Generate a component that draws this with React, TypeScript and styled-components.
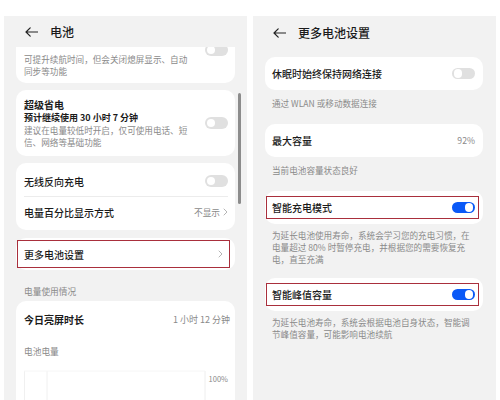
import React from "react";
import styled, { createGlobalStyle, css } from "styled-components";

const Global = createGlobalStyle`
  html, body { margin: 0; padding: 0; background: #ffffff; }
  body { font-family: "Noto Sans CJK SC", "Noto Sans", sans-serif; color: #1b1b1b; }
  * { box-sizing: border-box; }
`;

const Screen = styled.div`
  width: 500px;
  height: 400px;
  overflow: hidden;
  display: flex;
  gap: 6px;
  padding: 16px 4px 0 4px;
`;

const Panel = styled.div`
  position: relative;
  width: 243px;
  height: 384px;
  background: #f2f2f2;
  display: flex;
  flex-direction: column;
  overflow: hidden;
`;

const Header = styled.div<{ $h: number; $pl: number }>`
  height: ${(p) => p.$h}px;
  flex: none;
  display: flex;
  align-items: center;
  padding-left: ${(p) => p.$pl}px;
  gap: 12px;
  background: #f2f2f2;
  position: relative;
  z-index: 1;
`;

const Title = styled.div`
  font-size: 12px;
  font-weight: 500;
  line-height: 14px;
  color: #1b1b1b;
`;

const Viewport = styled.div`
  flex: 1;
  overflow: hidden;
  padding: 0 12px 0 12px;
`;

const Shift = styled.div`
  margin-top: -10px;
  display: flex;
  flex-direction: column;
`;

const Card = styled.div<{ $mt?: number }>`
  background: #ffffff;
  border-radius: 10px;
  margin-top: ${(p) => p.$mt ?? 0}px;
`;

const TopClip = styled.div`
  padding: 7px 7px 6px 8px;
`;

const RightRow = styled.div`
  display: flex;
  justify-content: flex-end;
  height: 11px;
  margin-bottom: -2px;
`;

const Caption = styled.div`
  font-size: 8.6px;
  line-height: 12px;
  color: #8a8a8a;
`;

const SaverCard = styled.div`
  display: flex;
  align-items: center;
  gap: 8px;
  padding: 8px 7px 8px 8px;
`;

const SaverText = styled.div`
  flex: 1;
`;

const Strong = styled.div<{ $size: number }>`
  font-size: ${(p) => p.$size}px;
  line-height: 13px;
  font-weight: 700;
  color: #1b1b1b;
`;

const ListRow = styled.div<{ $h: number; $pt?: number; $pb?: number; $divider?: boolean }>`
  height: ${(p) => p.$h}px;
  display: flex;
  align-items: center;
  justify-content: space-between;
  margin: 0 7px 0 8px;
  padding-top: ${(p) => p.$pt ?? 0}px;
  padding-bottom: ${(p) => p.$pb ?? 0}px;
  ${(p) =>
    p.$divider &&
    css`
      border-bottom: 1px solid #ececec;
    `}
`;

const Label = styled.div`
  font-size: 10px;
  line-height: 13px;
  font-weight: 500;
  color: #1b1b1b;
`;

const Value = styled.div`
  display: flex;
  align-items: center;
  gap: 3px;
  font-size: 8.7px;
  color: #8a8a8a;
`;

const HighlightWrap = styled.div<{ $pad: string }>`
  padding: ${(p) => p.$pad};
`;

const Highlight = styled.div<{ $h: number; $pl: number; $pr: number }>`
  height: ${(p) => p.$h}px;
  border: 1.5px solid #a92f3c;
  display: flex;
  align-items: center;
  justify-content: space-between;
  padding-left: ${(p) => p.$pl}px;
  padding-right: ${(p) => p.$pr}px;
`;

const SectionLabel = styled.div`
  font-size: 8.7px;
  line-height: 11px;
  color: #8a8a8a;
  padding: 15.5px 0 4.5px 8px;
`;

const UsageCard = styled.div`
  background: #ffffff;
  border-radius: 10px 10px 0 0;
  padding: 12px 5px 0 8px;
  height: 120px;
`;

const UsageRow = styled.div`
  display: flex;
  justify-content: space-between;
  align-items: center;
  height: 13px;
`;

const UsageValue = styled.div`
  font-size: 9px;
  color: #8a8a8a;
`;

const SubLabel = styled.div`
  margin-top: 20px;
  font-size: 8.7px;
  line-height: 11px;
  color: #8a8a8a;
`;

const ChartArea = styled.div`
  position: relative;
  margin-top: 8px;
  height: 40px;
`;

const ChartTick = styled.div`
  position: absolute;
  right: 2px;
  top: 8px;
  font-size: 7.5px;
  color: #8a8a8a;
`;

const ScrollBar = styled.div`
  position: absolute;
  left: 234px;
  top: 77px;
  width: 2.5px;
  height: 111px;
  border-radius: 2px;
  background: #8c8c8c;
`;

const Track = styled.div<{ $on?: boolean }>`
  position: relative;
  flex: none;
  width: 23px;
  height: 11.5px;
  border-radius: 6px;
  background: ${(p) => (p.$on ? "#0a59f7" : "#e0e0e0")};
`;

const Knob = styled.div<{ $on?: boolean }>`
  position: absolute;
  top: 1.5px;
  left: ${(p) => (p.$on ? "12.5px" : "1.5px")};
  width: 8.5px;
  height: 8.5px;
  border-radius: 50%;
  background: #ffffff;
`;

const RightList = styled.div`
  padding: 0 13px 0 12px;
  display: flex;
  flex-direction: column;
`;

const RCard = styled.div<{ $mt?: number }>`
  background: #ffffff;
  border-radius: 10px;
  margin-top: ${(p) => p.$mt ?? 0}px;
`;

const RRow = styled.div`
  height: 33px;
  display: flex;
  align-items: center;
  justify-content: space-between;
  padding: 0 8px 0 7px;
`;

const RCaption = styled.div<{ $pt?: number; $pb?: number }>`
  font-size: 8.6px;
  line-height: 12px;
  color: #8a8a8a;
  padding: ${(p) => p.$pt ?? 6.5}px 6px ${(p) => p.$pb ?? 15.5}px 7px;
`;

const Toggle = ({ on }: { on?: boolean }) => (
  <Track $on={on}>
    <Knob $on={on} />
  </Track>
);

const BackArrow = () => (
  <svg width="13" height="10" viewBox="0 0 13 10" fill="none">
    <path d="M1 5H12.5M5.2 0.8L1 5L5.2 9.2" stroke="#222" strokeWidth="1.2" strokeLinecap="round" strokeLinejoin="round" />
  </svg>
);

const Chevron = () => (
  <svg width="5" height="8" viewBox="0 0 5 8" fill="none">
    <path d="M1 1L4 4L1 7" stroke="#b5b5b5" strokeWidth="1" strokeLinecap="round" strokeLinejoin="round" />
  </svg>
);

const ChartGrid = () => (
  <svg width="222" height="40" viewBox="0 0 222 40" style={{ position: "absolute", left: 0, top: 0 }}>
    <line x1="0.5" y1="6" x2="0.5" y2="40" stroke="#f0f0f0" />
    <line x1="23" y1="6" x2="23" y2="40" stroke="#f0f0f0" />
    <line x1="181" y1="6" x2="181" y2="40" stroke="#eeeeee" />
    <line x1="0" y1="6" x2="181" y2="6" stroke="#f6f6f6" />
  </svg>
);

export default function App() {
  return (
    <>
      <Global />
      <Screen>
        <Panel>
          <Header $h={31} $pl={21}>
            <BackArrow />
            <Title>电池</Title>
          </Header>
          <Viewport>
            <Shift>
              <Card>
                <TopClip>
                  <RightRow>
                    <Toggle />
                  </RightRow>
                  <Caption>
                    可提升续航时间，但会关闭熄屏显示、自动
                    <br />
                    同步等功能
                  </Caption>
                </TopClip>
              </Card>
              <Card $mt={7}>
                <SaverCard>
                  <SaverText>
                    <Strong $size={10}>超级省电</Strong>
                    <Strong $size={9}>预计继续使用 30 小时 7 分钟</Strong>
                    <Caption>
                      建议在电量较低时开启，仅可使用电话、短
                      <br />
                      信、网络等基础功能
                    </Caption>
                  </SaverText>
                  <Toggle />
                </SaverCard>
              </Card>
              <Card $mt={7}>
                <ListRow $h={34} $pt={3} $divider>
                  <Label>无线反向充电</Label>
                  <Toggle />
                </ListRow>
                <ListRow $h={33} $pb={3}>
                  <Label>电量百分比显示方式</Label>
                  <Value>
                    不显示
                    <Chevron />
                  </Value>
                </ListRow>
              </Card>
              <Card $mt={8}>
                <HighlightWrap $pad="2px 5px 2px 1px">
                  <Highlight $h={28} $pl={6} $pr={6}>
                    <Label>更多电池设置</Label>
                    <Chevron />
                  </Highlight>
                </HighlightWrap>
              </Card>
              <SectionLabel>电量使用情况</SectionLabel>
              <UsageCard>
                <UsageRow>
                  <Strong $size={10}>今日亮屏时长</Strong>
                  <UsageValue>1 小时 12 分钟</UsageValue>
                </UsageRow>
                <SubLabel>电池电量</SubLabel>
                <ChartArea>
                  <ChartGrid />
                  <ChartTick>100%</ChartTick>
                </ChartArea>
              </UsageCard>
            </Shift>
          </Viewport>
          <ScrollBar />
        </Panel>
        <Panel>
          <Header $h={34} $pl={20}>
            <BackArrow />
            <Title>更多电池设置</Title>
          </Header>
          <RightList>
            <RCard $mt={7}>
              <RRow>
                <Label>休眠时始终保持网络连接</Label>
                <Toggle />
              </RRow>
            </RCard>
            <RCaption>通过 WLAN 或移动数据连接</RCaption>
            <RCard>
              <RRow>
                <Label>最大容量</Label>
                <Value>92%</Value>
              </RRow>
            </RCard>
            <RCaption>当前电池容量状态良好</RCaption>
            <RCard>
              <HighlightWrap $pad="5px 4px 5px 1px">
                <Highlight $h={23} $pl={5} $pr={3}>
                  <Label>智能充电模式</Label>
                  <Toggle on />
                </Highlight>
              </HighlightWrap>
            </RCard>
            <RCaption $pt={5} $pb={13}>
              为延长电池使用寿命，系统会学习您的充电习惯，在
              <br />
              电量超过 80% 时暂停充电，并根据您的需要恢复充
              <br />
              电，直至充满
            </RCaption>
            <RCard>
              <HighlightWrap $pad="5px 4px 5px 1px">
                <Highlight $h={23} $pl={5} $pr={3}>
                  <Label>智能峰值容量</Label>
                  <Toggle on />
                </Highlight>
              </HighlightWrap>
            </RCard>
            <RCaption $pt={5} $pb={6}>
              为延长电池寿命，系统会根据电池自身状态，智能调
              <br />
              节峰值容量，可能影响电池续航
            </RCaption>
          </RightList>
        </Panel>
      </Screen>
    </>
  );
}
